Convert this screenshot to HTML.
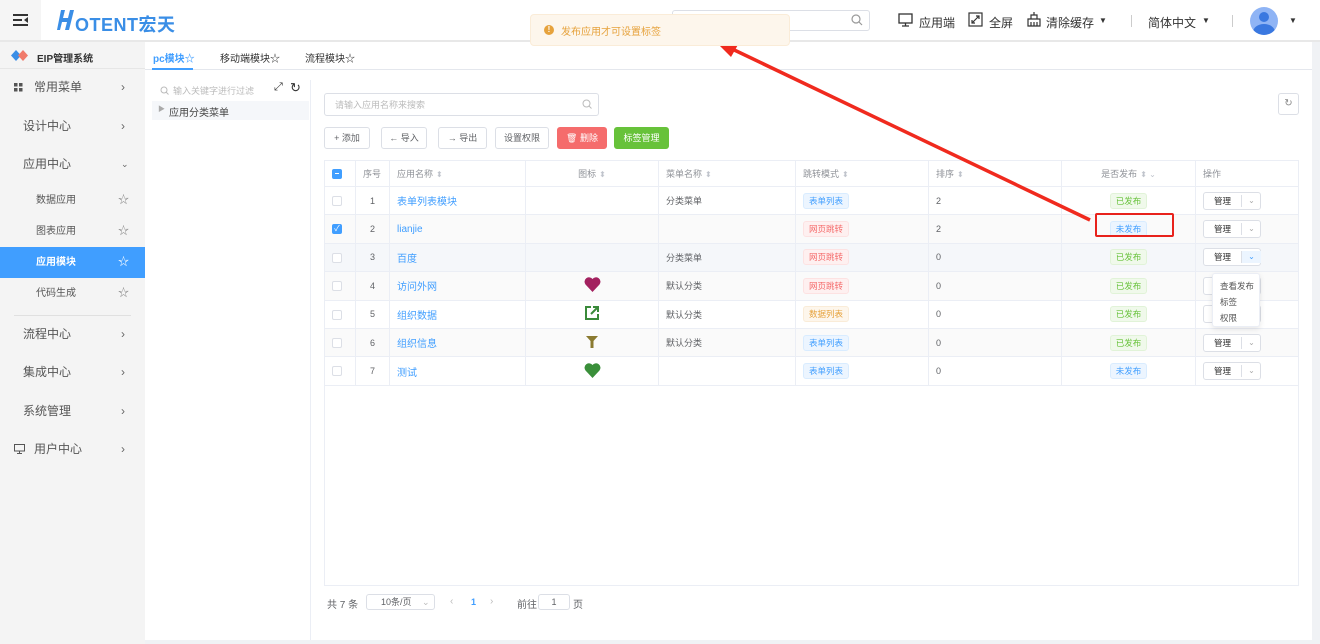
<!DOCTYPE html>
<html><head><meta charset="utf-8"><style>
*{box-sizing:border-box;margin:0;padding:0}
body{width:1320px;height:644px;overflow:hidden;background:#f0f2f5;font-family:"Liberation Sans","Noto Sans CJK SC",sans-serif;font-size:12px;color:#606266;position:relative}
.a{position:absolute}
.hdr{left:0;top:0;width:1320px;height:42px;background:#fff;border-bottom:2px solid #e8e8e8}
.side{left:0;top:42px;width:145px;height:602px;background:#f4f4f4}
.mi{position:absolute;left:0;width:145px;height:38px;line-height:38px;font-size:12px;color:#555}
.mi .t{position:absolute;left:23px}
.mi .ar{position:absolute;left:121px;top:0;color:#666;font-size:12px}
.sub{position:absolute;left:0;width:145px;height:31px;line-height:31px;font-size:10px;color:#555}
.sub .t{position:absolute;left:36px}
.sub .s{position:absolute;left:118px;font-size:11px;color:#888}
.main{left:145px;top:42px;width:1167px;height:598px;background:#fff}
.btn{position:absolute;top:127px;height:22px;border:1px solid #dcdfe6;border-radius:3px;background:#fff;font-size:9px;line-height:20px;text-align:center;color:#606266}
table{position:absolute;left:324px;top:160px;border-collapse:collapse;width:975px;font-size:9px}
td,th{border:1px solid #ebeef5;height:28.4px;padding:0 7px;font-weight:normal;text-align:left;color:#606266}
th{height:26px;color:#909399}
tr.alt td{background:#fafafa}
tr.hv td{background:#f5f7fa}
.cb{display:inline-block;width:10px;height:10px;border:1px solid #dcdfe6;border-radius:2px;background:#fff;vertical-align:middle}
.cb.on{background:#409eff;border-color:#409eff}
.lk{color:#409eff;font-size:10px}
.tag{display:inline-block;height:16px;line-height:14px;padding:0 5px;border-radius:3px;font-size:8.5px;border:1px solid}
.tb{background:#ecf5ff;border-color:#d9ecff;color:#409eff}
.tr{background:#fef0f0;border-color:#fde2e2;color:#f56c6c}
.to{background:#fdf6ec;border-color:#faecd8;color:#e6a23c}
.tg{background:#f0f9eb;border-color:#e1f3d8;color:#67c23a}
.mg{display:inline-block;width:58px;height:18px;border:1px solid #dcdfe6;border-radius:3px;font-size:8.5px;line-height:16px;vertical-align:middle;position:relative;background:#fff}
.mg span{position:absolute;left:10px;color:#333}
.mg i{position:absolute;left:37px;top:2px;height:12px;border-left:1px solid #dcdfe6;width:20px;text-align:center;font-style:normal;color:#aaa;font-size:8px;line-height:12px}
.sort{color:#c0c4cc;font-size:8px;margin-left:3px}
</style></head><body>
<div class="a hdr">
 <div class="a" style="left:0;top:0;width:41px;height:40px;background:#f5f5f5"></div>
 <svg class="a" style="left:13px;top:14px" width="16" height="12"><rect x="0" y="0" width="15" height="2" fill="#333"/><rect x="0" y="5" width="9" height="2" fill="#333"/><rect x="0" y="10" width="15" height="2" fill="#333"/><path d="M15 3 L11 6 L15 9Z" fill="#333"/></svg>
 <svg class="a" style="left:57px;top:10px" width="18" height="21"><path d="M4 0 H8 L6 8 H11 L13 0 H17 L12 20 H8 L10 12 H5 L3 20 H0 Z" fill="#3a8ee6"/></svg>
 <div class="a" style="left:75px;top:11px;font-size:18px;font-weight:bold;color:#3a8ee6;letter-spacing:0.5px">OTENT宏天</div>
 <div class="a" style="left:672px;top:10px;width:198px;height:21px;border:1px solid #dcdfe6;border-radius:3px"></div>
 <svg class="a" style="left:851px;top:14px" width="12" height="12"><circle cx="5" cy="5" r="4" fill="none" stroke="#999" stroke-width="1.2"/><path d="M8 8 L11 11" stroke="#999" stroke-width="1.2"/></svg>
 <svg class="a" style="left:898px;top:13px" width="16" height="14"><rect x="1" y="1" width="13" height="9" fill="none" stroke="#333" stroke-width="1.3"/><path d="M7.5 10 V13 M4 13 H11" stroke="#333" stroke-width="1.3"/></svg>
 <div class="a" style="left:919px;top:14px;font-size:12px;color:#333">应用端</div>
 <svg class="a" style="left:968px;top:12px" width="15" height="15"><rect x="1" y="1" width="13" height="13" fill="none" stroke="#333" stroke-width="1.2"/><path d="M4 11 L11 4 M8 4 H11 V7 M4 8 V11 H7" stroke="#333" stroke-width="1.2" fill="none"/></svg>
 <div class="a" style="left:989px;top:14px;font-size:12px;color:#333">全屏</div>
 <svg class="a" style="left:1026px;top:11px" width="16" height="16"><path d="M2 15 V8 H14 V15 Z M5 8 V4 H8 V1 M8 4 H11 V8 M5 15 V11 M8 15 V11 M11 15 V11" stroke="#333" stroke-width="1.2" fill="none"/></svg>
 <div class="a" style="left:1046px;top:14px;font-size:12px;color:#333">清除缓存</div>
 <div class="a" style="left:1099px;top:16px;font-size:8px;color:#333">▼</div>
 <div class="a" style="left:1131px;top:15px;width:1px;height:12px;background:#ccc"></div>
 <div class="a" style="left:1148px;top:14px;font-size:12px;color:#333">简体中文</div>
 <div class="a" style="left:1202px;top:16px;font-size:8px;color:#333">▼</div>
 <div class="a" style="left:1232px;top:15px;width:1px;height:12px;background:#ccc"></div>
 <div class="a" style="left:1250px;top:7px;width:28px;height:28px;border-radius:50%;background:#8fb4f5;overflow:hidden"><div class="a" style="left:9px;top:5px;width:10px;height:10px;border-radius:50%;background:#3a78e0"></div><div class="a" style="left:3px;top:17px;width:22px;height:16px;border-radius:50%;background:#3a78e0"></div></div>
 <div class="a" style="left:1289px;top:16px;font-size:8px;color:#333">▼</div>
</div>

<div class="a side">
 <div class="a" style="left:0;top:0;width:145px;height:27px;border-bottom:1px solid #e6e6e6"></div>
 <svg class="a" style="left:11px;top:8px" width="18" height="11"><path d="M0 5.5 L5 0 L10 5.5 L5 11Z" fill="#3a8ee6"/><path d="M7 5.5 L12 0 L17 5.5 L12 11Z" fill="#f07a6a"/></svg>
 <div class="a" style="left:37px;top:8px;font-size:10px;color:#333;font-weight:bold">EIP管理系统</div>
 <div class="mi" style="top:26px"><svg class="a" style="left:14px;top:15px" width="9" height="9"><rect x="0" y="0" width="3.5" height="3.5" fill="#555"/><rect x="5" y="0" width="3.5" height="3.5" fill="#555"/><rect x="0" y="5" width="3.5" height="3.5" fill="#555"/><rect x="5" y="5" width="3.5" height="3.5" fill="#555"/></svg><span class="t" style="left:34px">常用菜单</span><span class="ar">›</span></div>
 <div class="mi" style="top:65px"><span class="t">设计中心</span><span class="ar">›</span></div>
 <div class="mi" style="top:103px"><span class="t">应用中心</span><span class="ar" style="font-size:9px">⌄</span></div>
 <div class="sub" style="top:143px"><span class="t">数据应用</span><span class="s">☆</span></div>
 <div class="sub" style="top:174px"><span class="t">图表应用</span><span class="s">☆</span></div>
 <div class="sub" style="top:205px;background:#409eff;color:#fff"><span class="t" style="font-weight:bold">应用模块</span><span class="s" style="color:#fff">☆</span></div>
 <div class="sub" style="top:236px"><span class="t">代码生成</span><span class="s">☆</span></div>
 <div class="a" style="left:14px;top:273px;width:117px;height:1px;background:#e0e0e0"></div>
 <div class="mi" style="top:273px"><span class="t">流程中心</span><span class="ar">›</span></div>
 <div class="mi" style="top:311px"><span class="t">集成中心</span><span class="ar">›</span></div>
 <div class="mi" style="top:350px"><span class="t">系统管理</span><span class="ar">›</span></div>
 <div class="mi" style="top:388px"><svg class="a" style="left:14px;top:14px" width="11" height="10"><rect x="0.5" y="0.5" width="10" height="6.5" fill="none" stroke="#555"/><path d="M5.5 7 V9.5 M3 9.5 H8" stroke="#555"/></svg><span class="t" style="left:34px">用户中心</span><span class="ar">›</span></div>
</div>

<div class="a main">
 <div class="a" style="left:0;top:27px;width:1167px;height:1px;background:#e4e7ed"></div>
 <div class="a" style="left:8px;top:8px;font-size:10px;color:#409eff;font-weight:bold">pc模块☆</div>
 <div class="a" style="left:7px;top:26px;width:41px;height:2px;background:#409eff"></div>
 <div class="a" style="left:75px;top:8px;font-size:10px;color:#333">移动端模块☆</div>
 <div class="a" style="left:160px;top:8px;font-size:10px;color:#333">流程模块☆</div>
 <div class="a" style="left:165px;top:38px;width:1px;height:560px;background:#ebeef5"></div>
 <svg class="a" style="left:15px;top:44px" width="9" height="9"><circle cx="4" cy="4" r="3" fill="none" stroke="#bbb"/><path d="M6 6 L8.5 8.5" stroke="#bbb"/></svg>
 <div class="a" style="left:28px;top:42px;font-size:9px;color:#bbb">输入关键字进行过滤</div>
 <div class="a" style="left:129px;top:39px;font-size:11px;color:#333">⤢</div>
 <div class="a" style="left:145px;top:38px;font-size:13px;color:#333">↻</div>
 <div class="a" style="left:7px;top:59px;width:157px;height:19px;background:#f5f7fa"></div>
 <div class="a" style="left:13px;top:62px;font-size:7px;color:#aaa">▶</div>
 <div class="a" style="left:24px;top:62px;font-size:10px;color:#444">应用分类菜单</div>
 <div class="a" style="left:179px;top:51px;width:275px;height:23px;border:1px solid #dcdfe6;border-radius:3px"></div>
 <div class="a" style="left:190px;top:56px;font-size:9px;color:#bbb">请输入应用名称来搜索</div>
 <svg class="a" style="left:437px;top:57px" width="10" height="10"><circle cx="4.5" cy="4.5" r="3.5" fill="none" stroke="#bbb"/><path d="M7 7 L9.5 9.5" stroke="#bbb"/></svg>
 <div class="a" style="left:1133px;top:51px;width:21px;height:22px;border:1px solid #dcdfe6;border-radius:3px;text-align:center;line-height:20px;font-size:10px;color:#888">↻</div>
</div>
<div class="btn" style="left:324px;width:46px">+ 添加</div>
<div class="btn" style="left:381px;width:46px">← 导入</div>
<div class="btn" style="left:438px;width:49px">→ 导出</div>
<div class="btn" style="left:495px;width:54px">设置权限</div>
<div class="btn" style="left:557px;width:50px;background:#f56c6c;border-color:#f56c6c;color:#fff">🗑 删除</div>
<div class="btn" style="left:614px;width:55px;background:#67c23a;border-color:#67c23a;color:#fff">标签管理</div>

<table>
<tr><th style="width:31px"><span class="cb on" style="position:relative"><span style="position:absolute;left:2px;top:3.5px;width:4px;height:1px;background:#fff"></span></span></th><th style="width:34px">序号</th><th style="width:136px">应用名称<span class="sort">⬍</span></th><th style="width:133px;text-align:center">图标<span class="sort">⬍</span></th><th style="width:137px">菜单名称<span class="sort">⬍</span></th><th style="width:133px">跳转模式<span class="sort">⬍</span></th><th style="width:133px">排序<span class="sort">⬍</span></th><th style="width:134px;text-align:center">是否发布<span class="sort">⬍ ⌄</span></th><th>操作</th></tr>
<tr><td><span class="cb"></span></td><td style="text-align:center">1</td><td><span class="lk">表单列表模块</span></td><td></td><td>分类菜单</td><td><span class="tag tb">表单列表</span></td><td>2</td><td style="text-align:center"><span class="tag tg">已发布</span></td><td><span class="mg"><span>管理</span><i>⌄</i></span></td></tr>
<tr class="alt"><td><span class="cb on" style="color:#fff;font-size:8px;line-height:8px;text-align:center">✓</span></td><td style="text-align:center">2</td><td><span class="lk">lianjie</span></td><td></td><td></td><td><span class="tag tr">网页跳转</span></td><td>2</td><td style="text-align:center"><span class="tag tb">未发布</span></td><td><span class="mg"><span>管理</span><i>⌄</i></span></td></tr>
<tr class="hv"><td><span class="cb"></span></td><td style="text-align:center">3</td><td><span class="lk">百度</span></td><td></td><td>分类菜单</td><td><span class="tag tr">网页跳转</span></td><td>0</td><td style="text-align:center"><span class="tag tg">已发布</span></td><td><span class="mg"><span>管理</span><i style="background:#ecf5ff;color:#409eff">⌄</i></span></td></tr>
<tr class="alt"><td><span class="cb"></span></td><td style="text-align:center">4</td><td><span class="lk">访问外网</span></td><td style="text-align:center"><svg width="17" height="15" viewBox="0 0 17 15"><path d="M8.5 15 L1.5 7.5 A4 4 0 0 1 8.5 2 A4 4 0 0 1 15.5 7.5Z" fill="#a3215f"/></svg></td><td>默认分类</td><td><span class="tag tr">网页跳转</span></td><td>0</td><td style="text-align:center"><span class="tag tg">已发布</span></td><td><span class="mg"><span>管理</span><i>⌄</i></span></td></tr>
<tr><td><span class="cb"></span></td><td style="text-align:center">5</td><td><span class="lk">组织数据</span></td><td style="text-align:center"><svg width="16" height="16"><path d="M7 2 H2 V14 H14 V9" stroke="#3a8a3a" stroke-width="2" fill="none"/><path d="M7 9 L13 3 M9 2 H14 V7" stroke="#3a8a3a" stroke-width="2" fill="none"/></svg></td><td>默认分类</td><td><span class="tag to">数据列表</span></td><td>0</td><td style="text-align:center"><span class="tag tg">已发布</span></td><td><span class="mg"><span>管理</span><i>⌄</i></span></td></tr>
<tr class="alt"><td><span class="cb"></span></td><td style="text-align:center">6</td><td><span class="lk">组织信息</span></td><td style="text-align:center"><svg width="14" height="14"><path d="M1 1 H13 L8.5 6 V13 H5.5 V6Z" fill="#8a7a30"/></svg></td><td>默认分类</td><td><span class="tag tb">表单列表</span></td><td>0</td><td style="text-align:center"><span class="tag tg">已发布</span></td><td><span class="mg"><span>管理</span><i>⌄</i></span></td></tr>
<tr><td><span class="cb"></span></td><td style="text-align:center">7</td><td><span class="lk">测试</span></td><td style="text-align:center"><svg width="17" height="15" viewBox="0 0 17 15"><path d="M8.5 15 L1.5 7.5 A4 4 0 0 1 8.5 2 A4 4 0 0 1 15.5 7.5Z" fill="#3a8f3a"/></svg></td><td></td><td><span class="tag tb">表单列表</span></td><td>0</td><td style="text-align:center"><span class="tag tb">未发布</span></td><td><span class="mg"><span>管理</span><i>⌄</i></span></td></tr>
</table>
<div class="a" style="left:324px;top:385px;width:975px;height:201px;border:1px solid #ebeef5;border-top:none"></div>

<div class="a" style="left:1212px;top:273px;width:48px;height:54px;background:#fff;border:1px solid #ebeef5;border-radius:3px;box-shadow:0 2px 6px rgba(0,0,0,.1);font-size:8.5px;color:#555;line-height:16px;padding:4px 0 0 7px">查看发布<br>标签<br>权限</div>

<div class="a" style="left:1095px;top:213px;width:79px;height:24px;border:2px solid #e8221c;border-radius:2px"></div>
<svg class="a" style="left:0;top:0" width="1320" height="644"><path d="M1090 220 L728 47" stroke="#f02a1e" stroke-width="3.5"/><path d="M716 42 L739 43 L731 57Z" fill="#f02a1e"/></svg>

<div class="a" style="left:530px;top:14px;width:260px;height:32px;background:#fdf6ec;border:1px solid #faecd8;border-radius:4px"></div>
<div class="a" style="left:544px;top:25px;width:10px;height:10px;border-radius:50%;background:#e6a23c;color:#fff;font-size:8px;line-height:10px;text-align:center;font-weight:bold">!</div>
<div class="a" style="left:561px;top:23px;font-size:10px;color:#e6a23c">发布应用才可设置标签</div>

<div class="a" style="left:327px;top:596px;font-size:10px;color:#606266">共 7 条</div>
<div class="a" style="left:366px;top:594px;width:69px;height:16px;border:1px solid #dcdfe6;border-radius:3px;font-size:9px;line-height:14px;padding-left:14px;color:#606266">10条/页 <span style="color:#bbb;margin-left:8px">⌄</span></div>
<div class="a" style="left:450px;top:596px;font-size:10px;color:#bbb">‹</div>
<div class="a" style="left:471px;top:597px;font-size:9px;color:#409eff;font-weight:bold">1</div>
<div class="a" style="left:490px;top:596px;font-size:10px;color:#bbb">›</div>
<div class="a" style="left:517px;top:596px;font-size:10px;color:#606266">前往</div>
<div class="a" style="left:538px;top:594px;width:32px;height:16px;border:1px solid #dcdfe6;border-radius:3px;font-size:9px;line-height:14px;text-align:center;color:#606266">1</div>
<div class="a" style="left:573px;top:596px;font-size:10px;color:#606266">页</div>
</body></html>
